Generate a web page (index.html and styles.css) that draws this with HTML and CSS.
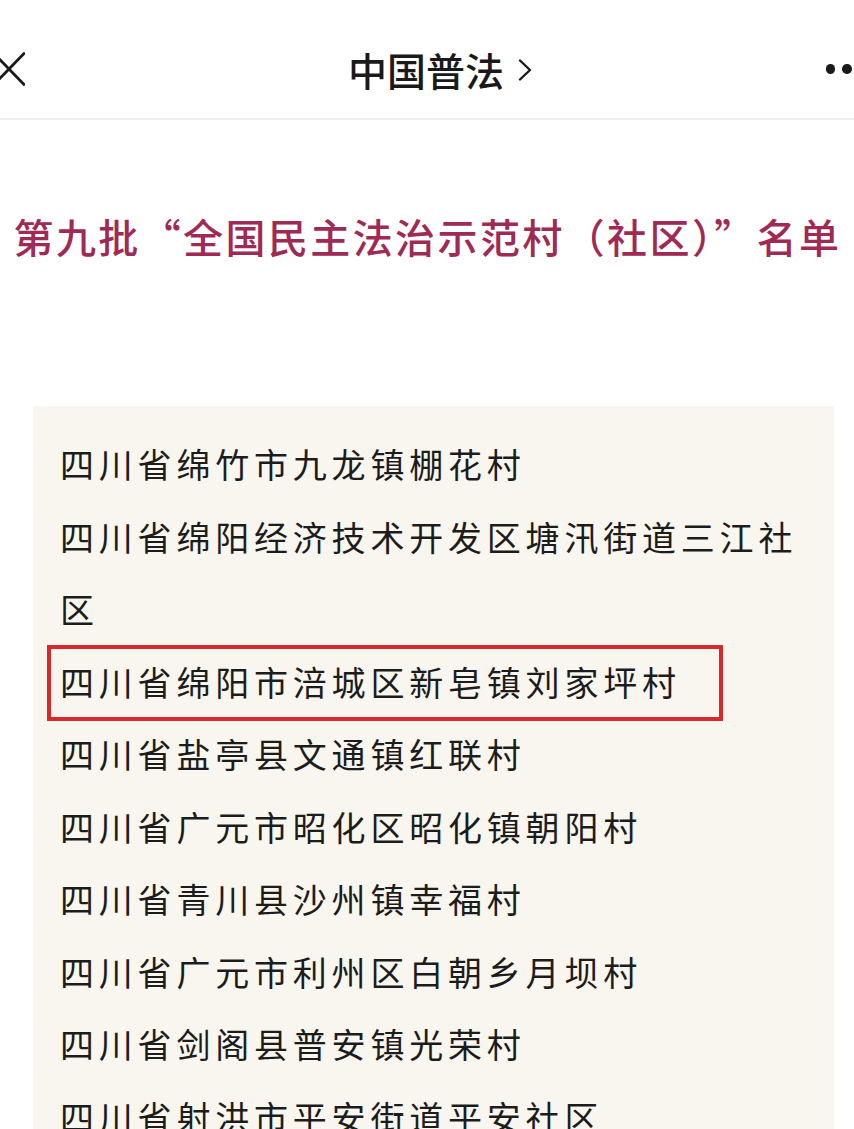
FILE: index.html
```html
<!DOCTYPE html>
<html lang="zh-CN">
<head>
<meta charset="utf-8">
<title>中国普法</title>
<link rel="stylesheet" href="styles.css">
</head>
<body>
<header class="topbar">
  <div class="left">
    <svg class="close" width="32" height="34" viewBox="0 0 32 34"><path d="M1 1.5 L31 32.5 M31 1.5 L1 32.5" stroke="#1a1a1a" stroke-width="2.8" fill="none" stroke-linecap="round"/></svg>
  </div>
  <div class="title">中国普法<svg class="chev" width="14" height="22" viewBox="0 0 14 22"><path d="M2 1.5 L12 11 L2 20.5" stroke="#1a1a1a" stroke-width="2.4" fill="none" stroke-linecap="round" stroke-linejoin="round"/></svg></div>
  <div class="right">
    <span class="dot"></span><span class="dot"></span><span class="dot"></span>
  </div>
</header>
<h1 class="heading">第九批“全国民主法治示范村（社区）”名单</h1>
<section class="card">
  <ul class="list">
    <li>四川省绵竹市九龙镇棚花村</li>
    <li>四川省绵阳经济技术开发区塘汛街道三江社区</li>
    <li><span class="hl">四川省绵阳市涪城区新皂镇刘家坪村</span></li>
    <li>四川省盐亭县文通镇红联村</li>
    <li>四川省广元市昭化区昭化镇朝阳村</li>
    <li>四川省青川县沙州镇幸福村</li>
    <li>四川省广元市利州区白朝乡月坝村</li>
    <li>四川省剑阁县普安镇光荣村</li>
    <li>四川省射洪市平安街道平安社区</li>
  </ul>
</section>
</body>
</html>
```
FILE: styles.css
```css
html, body {
  margin: 0;
  padding: 0;
  background: #ffffff;
  font-family: "Noto Sans CJK SC", "Noto Sans", sans-serif;
  overflow: hidden;
}

.topbar {
  height: 120px;
  box-sizing: border-box;
  padding-top: 20px;
  border-bottom: 2px solid #efefef;
  display: grid;
  grid-template-columns: 1fr auto 1fr;
  align-items: center;
  overflow: hidden;
}

.left {
  display: flex;
  align-items: center;
  margin-left: -7px;
}

.title {
  font-size: 39px;
  font-weight: 500;
  color: #1a1a1a;
  padding-left: 26px;
  display: flex;
  align-items: center;
}

.chev {
  margin-left: 14px;
  margin-top: 2px;
}

.right {
  display: flex;
  justify-content: flex-end;
  gap: 7px;
  margin-right: -14px;
}

.dot {
  width: 9.5px;
  height: 9.5px;
  border-radius: 50%;
  background: #1a1a1a;
  flex: none;
}

.heading {
  margin: 91px 0 0;
  text-align: center;
  font-size: 40px;
  font-weight: 500;
  color: #9f2a55;
  letter-spacing: 2.4px;
  line-height: 50px;
  padding-left: 1px;
  white-space: nowrap;
}

.card {
  margin: 145px 20px 0 33px;
  background: #f8f6ef;
  padding: 22px 27px 60px 27px;
}

.list {
  list-style: none;
  margin: 0;
  padding: 0;
}

.list li {
  font-size: 34px;
  letter-spacing: 4.8px;
  line-height: 72.5px;
  color: #1c1c1c;
}

.hl {
  position: relative;
  display: inline-block;
}

.hl::after {
  content: "";
  position: absolute;
  left: -13px;
  top: -1px;
  bottom: -3px;
  right: -42px;
  border: 4px solid #d8282b;
}
```
